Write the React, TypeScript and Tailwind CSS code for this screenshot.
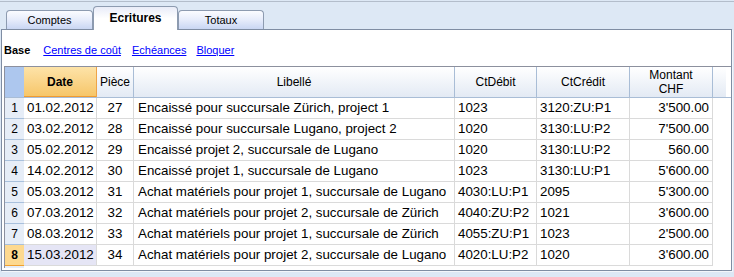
import React from 'react';

type Row = {
  date: string;
  piece: string;
  libelle: string;
  debit: string;
  credit: string;
  montant: string;
};

const rows: Row[] = [
  { date: '01.02.2012', piece: '27', libelle: 'Encaissé pour succursale Zürich, project 1', debit: '1023', credit: '3120:ZU:P1', montant: "3'500.00" },
  { date: '03.02.2012', piece: '28', libelle: 'Encaissé pour succursale Lugano, project 2', debit: '1020', credit: '3130:LU:P2', montant: "7'500.00" },
  { date: '05.02.2012', piece: '29', libelle: 'Encaissé projet 2, succursale de Lugano', debit: '1020', credit: '3130:LU:P2', montant: '560.00' },
  { date: '14.02.2012', piece: '30', libelle: 'Encaissé projet 1, succursale de Lugano', debit: '1023', credit: '3130:LU:P1', montant: "5'600.00" },
  { date: '05.03.2012', piece: '31', libelle: 'Achat matériels pour projet 1, succursale de Lugano', debit: '4030:LU:P1', credit: '2095', montant: "5'300.00" },
  { date: '07.03.2012', piece: '32', libelle: 'Achat matériels pour projet 2, succursale de Zürich', debit: '4040:ZU:P2', credit: '1021', montant: "3'600.00" },
  { date: '08.03.2012', piece: '33', libelle: 'Achat matériels pour projet 1, succursale de Zürich', debit: '4055:ZU:P1', credit: '1023', montant: "2'500.00" },
  { date: '15.03.2012', piece: '34', libelle: 'Achat matériels pour projet 2, succursale de Lugano', debit: '4020:LU:P2', credit: '1020', montant: "3'600.00" },
];

const ui = { fontFamily: '"Liberation Sans", Arial, sans-serif' };

const headCell =
  'flex items-center justify-center text-center text-[12px] leading-[14px] text-black border-r border-[#a9bdd6] bg-gradient-to-b from-white to-[#e3eaf4]';

const App: React.FC = () => {
  return (
    <div className="w-[734px] h-[277px] bg-[#dde8f5] pt-px overflow-hidden" style={ui}>
      <div className="h-px bg-[#b3bdcb]" />

      {/* tabs */}
      <div className="flex items-end h-[27px] pl-[6px]">
        <div className="w-[87px] h-[19px] flex items-center justify-center border border-b-0 border-[#8d9bb0] rounded-t-[4px] bg-gradient-to-b from-[#fbfcff] via-[#e6ecfb] to-[#c9d6f3] text-[11px] text-black">
          Comptes
        </div>
        <div className="relative z-10 -mb-px w-[85px] h-[24px] flex items-center justify-center pb-px border border-b-0 border-[#8d9bb0] rounded-t-[4px] bg-gradient-to-b from-[#e9ecf8] via-white to-white text-[12px] font-bold text-black">
          Ecritures
        </div>
        <div className="w-[86px] h-[19px] flex items-center justify-center border border-b-0 border-[#8d9bb0] rounded-t-[4px] bg-gradient-to-b from-[#fbfcff] via-[#e6ecfb] to-[#c9d6f3] text-[11px] text-black">
          Totaux
        </div>
      </div>

      {/* panel */}
      <div className="ml-px w-[731px] h-[242px] bg-white border border-[#7f8da3] shadow-[1px_1px_0_0_#f3f6fb] pt-[14px]">
        <div className="flex items-center h-[13px] leading-[13px] text-[11px] pl-[2px]">
          <span className="font-bold text-black">Base</span>
          <span className="ml-[13px] text-[#0000ff] underline">Centres de coût</span>
          <span className="ml-[11px] text-[#0000ff] underline">Echéances</span>
          <span className="ml-[10px] text-[#0000ff] underline">Bloquer</span>
        </div>

        <div className="mt-[9px] ml-[2px] border-t border-l border-[#8c909e]">
          <div className="grid grid-cols-[19px_73px_37px_321px_82px_93px_83px_13px] h-[31px] border-b border-[#a9bdd6]">
            <div className="bg-[#adc7ee]" />
            <div className="flex items-center justify-center text-[12px] font-bold border-r border-[#eea448] bg-gradient-to-b from-[#fde3a8] to-[#f6c566] shadow-[inset_0_-1px_0_#f09c30]">
              Date
            </div>
            <div className={headCell}>Pièce</div>
            <div className={headCell}>Libellé</div>
            <div className={headCell}>CtDébit</div>
            <div className={headCell}>CtCrédit</div>
            <div className={headCell}>
              Montant
              <br />
              CHF
            </div>
            <div className="bg-gradient-to-b from-white to-[#e3eaf4]" />
          </div>

          {rows.map((r, i) => {
            const last = i === rows.length - 1;
            return (
              <div
                key={i}
                className="grid grid-cols-[19px_73px_37px_321px_82px_93px_83px_13px] h-[21px] text-[13.33px] leading-[20px] text-black"
              >
                <div
                  className={
                    last
                      ? 'flex items-center justify-center text-[12px] font-bold bg-[#fdd98f] border-b border-[#f0a030]'
                      : 'flex items-center justify-center text-[12px] bg-[#e6edf7] border-b border-[#a8c0dc]'
                  }
                >
                  {i + 1}
                </div>
                <div className={`pl-[3px] whitespace-nowrap border-r border-b border-[#dadada] ${last ? 'bg-[#e5e5f5]' : ''}`}>
                  {r.date}
                </div>
                <div className="text-center border-r border-b border-[#dadada]">{r.piece}</div>
                <div className="pl-[4px] whitespace-nowrap overflow-hidden border-r border-b border-[#dadada]">{r.libelle}</div>
                <div className="pl-[3px] whitespace-nowrap border-r border-b border-[#dadada]">{r.debit}</div>
                <div className="pl-[3px] whitespace-nowrap border-r border-b border-[#dadada]">{r.credit}</div>
                <div className="pr-[3px] text-right whitespace-nowrap border-r border-b border-[#dadada]">{r.montant}</div>
                <div />
              </div>
            );
          })}
          <div className="w-[19px] h-[2px] bg-[#e6edf7]" />
        </div>
      </div>
    </div>
  );
};

export default App;
